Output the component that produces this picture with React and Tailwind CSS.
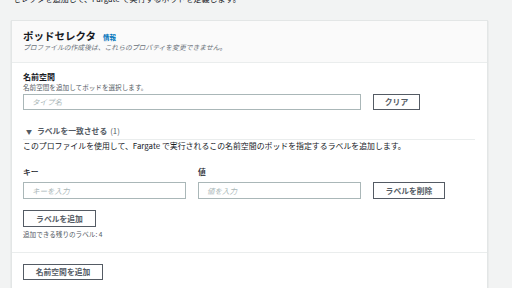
import React from 'react';

const font = { fontFamily: '"Noto Sans CJK JP", "Noto Sans", sans-serif' };

const Btn = ({ children, className = '' }) => (
  <button
    className={`flex items-center justify-center border border-[#545b64] bg-white text-[7.8px] font-bold text-[#545b64] leading-none ${className}`}
  >
    {children}
  </button>
);

const Input = ({ placeholder, className = '' }) => (
  <div
    className={`flex items-center border border-[#aab7b8] bg-white pl-[8px] text-[7.5px] italic text-[#aab7b8] leading-none ${className}`}
  >
    {placeholder}
  </div>
);

const App = () => {
  return (
    <div className="w-[512px] h-[288px] overflow-hidden bg-[#f2f3f3] text-[#16191f]" style={font}>
      <div className="-mt-[6px] h-[10px] pl-[13px] text-[8px] leading-[10px] text-[#16191f]">
        セレクタを追加して、Fargate で実行するポッドを定義します。
      </div>

      <div className="ml-[11px] mt-[16px] w-[477px] border border-[#e3e6e6] bg-white shadow-[0_1px_1px_rgba(0,28,36,0.2)]">
        {/* header */}
        <div className="h-[42px] border-b border-[#eaeded] bg-[#fafafa] px-[11px] pt-[9px]">
          <div className="flex items-baseline leading-[11px]">
            <span className="text-[10.5px] font-bold">ポッドセレクタ</span>
            <span className="ml-[7px] text-[6.5px] font-bold text-[#0073bb]">情報</span>
          </div>
          <div className="text-[6.8px] italic leading-[8px] text-[#687078]">
            プロファイルの作成後は、これらのプロパティを変更できません。
          </div>
        </div>

        {/* body */}
        <div className="px-[11px] pt-[9px] pb-[14px]">
          <div className="text-[8px] font-bold leading-[10px]">名前空間</div>
          <div className="text-[6.6px] leading-[10px] text-[#545b64]">
            名前空間を追加してポッドを選択します。
          </div>
          <div className="mt-[2px] flex gap-[12px]">
            <Input placeholder="タイプ名" className="h-[16px] w-[338px]" />
            <Btn className="h-[16px] w-[47px]">クリア</Btn>
          </div>

          <div className="mt-[16px] mr-[1px] border-b border-[#eaeded] pb-[2px] pl-[3px] text-[7.8px] font-bold leading-[10px] text-[#545b64]">
            <span className="text-[6px]">▼</span>
            <span className="ml-[5px]">ラベルを一致させる</span>
            <span className="ml-[3px] font-normal text-[#545b64]">(1)</span>
          </div>

          <div className="mt-[1px] text-[7.9px] leading-[10px]">
            このプロファイルを使用して、Fargate で実行されるこの名前空間のポッドを指定するラベルを追加します。
          </div>

          <div className="mt-[16px] grid grid-cols-[163px_163px_72px] gap-x-[12px]">
            <div className="text-[7.8px] font-medium leading-[10px]">キー</div>
            <div className="text-[7.8px] font-medium leading-[10px]">値</div>
            <div />
            <Input placeholder="キーを入力" className="mt-[5px] h-[17px]" />
            <Input placeholder="値を入力" className="mt-[5px] h-[17px]" />
            <Btn className="mt-[5px] h-[17px]">ラベルを削除</Btn>
          </div>

          <Btn className="mt-[11px] h-[17px] w-[73px]">ラベルを追加</Btn>
          <div className="mt-[3px] text-[6.6px] leading-[8px] text-[#545b64]">
            追加できる残りのラベル: 4
          </div>
        </div>

        <div className="border-t border-[#eaeded] px-[11px] pt-[11px] pb-[20px]">
          <Btn className="h-[16px] w-[80px]">名前空間を追加</Btn>
        </div>
      </div>
    </div>
  );
};

export default App;
